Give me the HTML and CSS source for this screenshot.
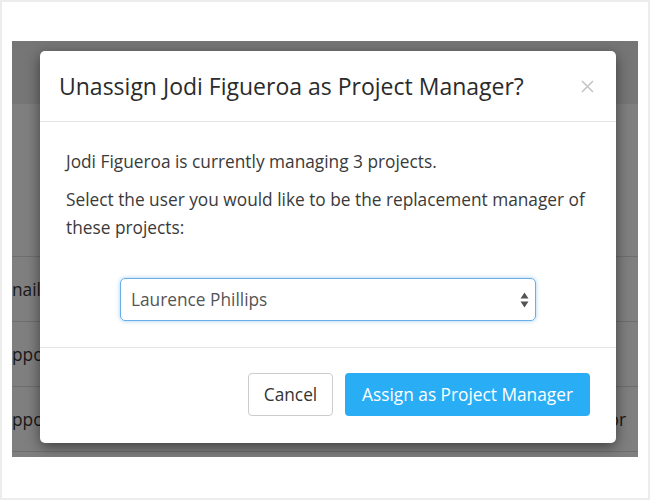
FILE: index.html
```html
<!DOCTYPE html>
<html lang="en">
  <head>
    <meta charset="UTF-8" />
    <meta name="viewport" content="width=device-width, initial-scale=1.0" />
    <title>Unassign Project Manager</title>
    <link rel="stylesheet" href="styles.css">
  </head>
  <body>
    <div class="frame">
      <div class="screen">
        <div class="page">
          <div class="page-header"></div>
          <div class="page-space"></div>
          <div class="table">
            <div class="row">
              <span class="cell">nail</span>
            </div>
            <div class="row">
              <span class="cell">ppo</span>
            </div>
            <div class="row">
              <span class="cell">ppo</span>
              <span class="cell cell-right">or</span>
            </div>
          </div>
        </div>
        <div class="backdrop"></div>

        <div class="modal">
          <div class="modal-header">
            <h4 class="modal-title">Unassign Jodi Figueroa as Project Manager?</h4>
            <svg class="close" width="13" height="13" viewBox="0 0 13 13">
              <path d="M1 1L12 12M12 1L1 12" stroke="#c4c4c4" stroke-width="1.6" fill="none" />
            </svg>
          </div>
          <div class="modal-body">
            <p>Jodi Figueroa is currently managing 3 projects.</p>
            <p>Select the user you would like to be the replacement manager of these projects:</p>
            <div class="select-box">
              <span>Laurence Phillips</span>
              <svg width="9" height="16" viewBox="0 0 9 16">
                <path d="M4.5 0.5L8.5 6.5H0.5Z M4.5 15.5L8.5 9.5H0.5Z" fill="#555" />
              </svg>
            </div>
          </div>
          <div class="modal-footer">
            <button class="btn btn-default">Cancel</button>
            <button class="btn btn-primary">Assign as Project Manager</button>
          </div>
        </div>
      </div>
    </div>
  </body>
</html>
```

FILE: styles.css
```css
* {
  box-sizing: border-box;
}
html {
  font-family: "Open Sans", "Liberation Sans", sans-serif;
}
body {
  margin: 0;
  background: #fff;
}
.frame {
  width: 650px;
  height: 500px;
  border: 2px solid #ececec;
  padding: 39px 0 0 10px;
}
.screen {
  position: relative;
  width: 626px;
  height: 416px;
  overflow: hidden;
  background: #fff;
}
.page-header {
  height: 63px;
  background: #ececec;
}
.page-space {
  height: 152px;
}
.table {
  border-top: 1px solid #ddd;
}
.row {
  display: flex;
  justify-content: space-between;
  align-items: center;
  height: 65px;
  border-bottom: 1px solid #ddd;
  font-size: 17.3px;
  color: #333;
}
.cell-right {
  margin-right: 12px;
}
.backdrop {
  position: absolute;
  inset: 0;
  background: rgba(0, 0, 0, 0.5);
}

.modal {
  position: absolute;
  left: 28px;
  top: 10px;
  width: 576px;
  height: 392px;
  background: #fff;
  border-radius: 5px;
  box-shadow: 0 4px 14px rgba(0, 0, 0, 0.5);
  color: #333;
}
.modal-header {
  display: flex;
  align-items: center;
  justify-content: space-between;
  height: 71px;
  padding: 0 22px 0 19px;
  border-bottom: 1px solid #e5e5e5;
}
.modal-title {
  margin: 0;
  font-size: 23px;
  font-weight: 400;
  color: #2b2b2b;
}
.modal-body {
  height: 225px;
  padding: 26px 26px 0;
  font-size: 17.3px;
  line-height: 28px;
  color: #3a3a3a;
}
.modal-body p {
  margin: 0 0 10px;
}
.select-box {
  display: flex;
  align-items: center;
  justify-content: space-between;
  width: 416px;
  height: 43px;
  margin: 36px auto 0;
  padding: 0 6px 0 10px;
  border: 1px solid #66afe9;
  border-radius: 5px;
  box-shadow: 0 0 4px rgba(102, 175, 233, 0.6);
  color: #555;
}
.modal-footer {
  display: flex;
  justify-content: flex-end;
  gap: 12px;
  padding: 25px 26px 0;
  border-top: 1px solid #e5e5e5;
}
.btn {
  height: 43px;
  padding: 0;
  font-family: inherit;
  font-size: 17.3px;
  border-radius: 4px;
  border: 1px solid transparent;
}
.btn-default {
  width: 85px;
  background: #fff;
  border-color: #ccc;
  color: #333;
}
.btn-primary {
  width: 245px;
  background: #29aef5;
  color: #fff;
}
```
